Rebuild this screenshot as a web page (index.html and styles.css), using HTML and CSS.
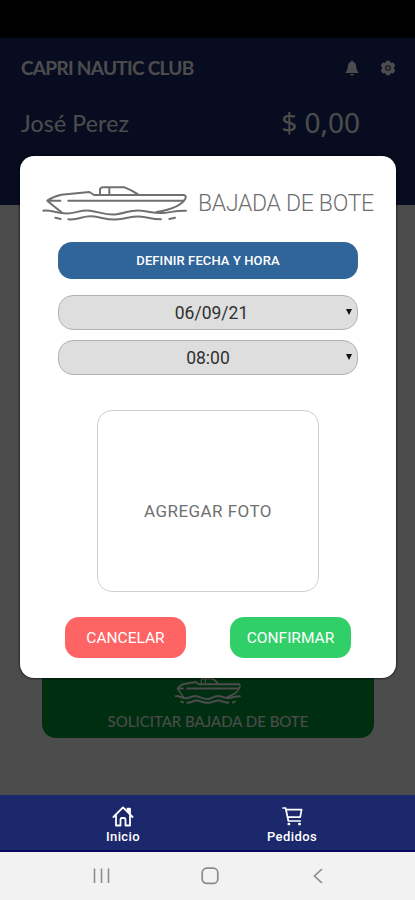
FILE: index.html
```
<!DOCTYPE html>
<html lang="es">
<head>
    <meta charset="UTF-8">
    <title>Capri Nautic Club</title>
    <link rel="stylesheet" href="styles.css">
</head>
<body>
    <svg class="symbols">
        <symbol id="boat" viewBox="0 0 450 135" preserveAspectRatio="none">
            <g fill="none" stroke="currentColor" stroke-linecap="round" stroke-linejoin="round">
                <path d="M64 96 Q38 76 22 62 Q40 49 64 44 L148 36 L162 45 H431 Q440 46 436 56 Q420 84 350 96"/>
                <path d="M180 43 V29 Q181 22 190 22 H254 Q274 30 294 43 M208 22 V43"/>
                <path d="M24 62 H61 M85 62 H430"/>
                <path d="M10 92 C35 90 44 98 72 100 C105 103 120 88 150 92 C180 96 200 107 230 103 C265 98 270 88 305 92 C335 96 345 101 370 99 C395 97 405 91 438 92"/>
                <path d="M46 113 L62 117 M85 118 C120 120 125 108 155 109 C185 111 200 121 235 118 C265 115 275 107 305 110 C330 113 335 118 363 118 M388 117 L405 113"/>
            </g>
        </symbol>
    </svg>
    <div class="phone">
        <div class="status-bar"></div>
        <div class="header">
            <div class="header-row">
                <div class="club">CAPRI NAUTIC CLUB</div>
                <div class="header-icons">
                    <svg width="14" height="16" viewBox="0 0 14 16" fill="currentColor">
                        <path d="M7 0.6 Q8 0.6 8 1.8 Q11 2.7 11.2 6.4 Q11.3 10.5 13.3 12 V13 H0.7 V12 Q2.7 10.5 2.8 6.4 Q3 2.7 6 1.8 Q6 0.6 7 0.6Z"/>
                        <path d="M5 14 H9 Q8.6 15.6 7 15.6 Q5.4 15.6 5 14Z"/>
                    </svg>
                    <svg width="16" height="16" viewBox="0 0 16 16">
                        <path fill="currentColor" fill-rule="evenodd" d="M6.2 0.7h3.6l.5 1.6 1.2.7 1.9-.5 1.9 3.1-1.3 1.6v1.6l1.3 1.6-1.9 3.1-1.9-.5-1.2.7-.5 1.6H6.2l-.5-1.6-1.2-.7-1.9.5L.7 10.4 2 8.8V7.2L.7 5.6l1.9-3.1 1.9.5 1.2-.7zM8 5.2a2.8 2.8 0 1 0 0 5.6 2.8 2.8 0 0 0 0-5.6z"/>
                        <circle cx="8" cy="8" r="1.8" fill="currentColor"/>
                    </svg>
                </div>
            </div>
            <div class="header-row account">
                <div class="user">José Perez</div>
                <div class="balance">$ 0,00</div>
            </div>
        </div>
        <div class="content">
            <div class="request">
                <svg class="request-boat"><use href="#boat"/></svg>
                <div class="request-text">SOLICITAR BAJADA DE BOTE</div>
            </div>
        </div>
        <div class="tabs">
            <div class="tab">
                <svg width="24" height="22" viewBox="0 0 24 22" fill="none" stroke="currentColor" stroke-width="1.8" stroke-linejoin="round" stroke-linecap="round">
                    <path d="M2.4 12 L12 2.4 L21.6 12 M5 10.5 V20.5 H9.5 V14.5 Q9.5 13 11 13 H13 Q14.5 13 14.5 14.5 V20.5 H19 V10.5"/>
                    <path fill="currentColor" d="M16.5 6 V3.6 H19 V8.5Z"/>
                </svg>
                <span>Inicio</span>
            </div>
            <div class="tab">
                <svg width="24" height="22" viewBox="0 0 24 22" fill="none" stroke="currentColor" stroke-width="1.7" stroke-linejoin="round" stroke-linecap="round">
                    <path d="M3 3 H5.6 L8.4 16 H20.2 M6.2 4.6 H21.6 L20.2 12.2 H7.6"/>
                    <path fill="currentColor" d="M8.4 18.6 H9.4 V19.4 H8.4Z M19 18.6 H20 V19.4 H19Z"/>
                </svg>
                <span>Pedidos</span>
            </div>
        </div>
        <div class="nav-bar">
            <svg width="18" height="18" viewBox="0 0 18 18" stroke="#8c8c8c" stroke-width="1.6">
                <path d="M1.5 1.5 V16 M8.5 1.5 V16 M15.5 1.5 V16"/>
            </svg>
            <svg width="18" height="18" viewBox="0 0 18 18" fill="none" stroke="#8c8c8c" stroke-width="1.7">
                <rect x="1.2" y="1.2" width="15.6" height="15.2" rx="4.5"/>
            </svg>
            <svg width="18" height="18" viewBox="0 0 18 18" fill="none" stroke="#8c8c8c" stroke-width="1.7">
                <path d="M13 2 L5.5 9 L13 16"/>
            </svg>
        </div>

        <div class="overlay">
            <div class="modal">
                <div class="modal-title">
                    <svg class="modal-boat"><use href="#boat"/></svg>
                    <span>BAJADA DE BOTE</span>
                </div>
                <button class="define">DEFINIR FECHA Y HORA</button>
                <div class="select date">06/09/21<i class="arrow"></i></div>
                <div class="select">08:00<i class="arrow"></i></div>
                <div class="photo">AGREGAR FOTO</div>
                <div class="actions">
                    <button class="cancel">CANCELAR</button>
                    <button class="confirm">CONFIRMAR</button>
                </div>
            </div>
        </div>
    </div>
</body>
</html>
```
FILE: styles.css
```
* {
    box-sizing: border-box;
}
body {
    margin: 0;
    font-family: Roboto, "Liberation Sans", sans-serif;
}
svg {
    display: block;
    flex: none;
}
.symbols {
    display: none;
}
.phone {
    position: relative;
    width: 415px;
    height: 900px;
    display: flex;
    flex-direction: column;
    overflow: hidden;
}
.status-bar {
    height: 38px;
    background: #000;
}
.header {
    height: 167px;
    padding: 15px 19px 0 21px;
    background: #18286c;
    color: #fff;
    font-family: Lato, sans-serif;
}
.header-row {
    display: flex;
    justify-content: space-between;
    align-items: center;
    height: 30px;
}
.club {
    padding-bottom: 2px;
    font-size: 19px;
    font-weight: bold;
    letter-spacing: -0.7px;
}
.header-icons {
    display: flex;
    gap: 21px;
}
.account {
    height: 38px;
    margin-top: 20px;
    padding-right: 36px;
}
.user {
    padding-top: 2px;
    font-size: 23px;
    letter-spacing: 0.2px;
}
.balance {
    font-family: "Noto Sans", sans-serif;
    font-size: 28px;
}
.content {
    flex: 1;
    display: flex;
    flex-direction: column;
    justify-content: flex-end;
    padding: 0 41px 57px 42px;
    background: #fff;
}
.request {
    height: 110px;
    padding-top: 45px;
    border-radius: 14px;
    background: #009a38;
    color: #fff;
    text-align: center;
}
.request-boat {
    width: 68px;
    height: 34px;
    margin: 0 auto;
    stroke-width: 8px;
}
.request-text {
    margin-top: 5px;
    font-family: Lato, sans-serif;
    font-size: 15px;
    line-height: 18px;
}
.tabs {
    display: flex;
    justify-content: space-between;
    height: 57px;
    padding: 10px 83px 0;
    background: #1c286c;
    border-bottom: 2px solid #08085c;
    color: #fff;
}
.tab {
    display: flex;
    flex-direction: column;
    align-items: center;
    width: 80px;
    font-size: 13px;
    font-weight: 500;
    line-height: 20px;
    letter-spacing: 0.4px;
}
.nav-bar {
    display: flex;
    justify-content: space-between;
    height: 48px;
    padding: 15px 88px 0 93px;
    background: #f2f2f2;
}

/* modal */
.overlay {
    position: absolute;
    top: 0;
    left: 0;
    width: 415px;
    height: 795px;
    padding: 156px 19px 0 20px;
    background: rgba(0, 0, 0, 0.7);
}
.modal {
    display: flex;
    flex-direction: column;
    align-items: center;
    height: 522px;
    padding-top: 24px;
    border-radius: 14px;
    background: #fff;
    box-shadow: 0 0 3px #000;
}
.modal-title {
    display: flex;
    align-items: center;
    gap: 8px;
    align-self: flex-start;
    margin-left: 20px;
    height: 45px;
    color: #707070;
    font-size: 23px;
    font-weight: 300;
    letter-spacing: -0.3px;
    white-space: nowrap;
}
.modal-title span {
    padding-top: 2px;
}
.modal-boat {
    width: 150px;
    height: 45px;
    stroke-width: 6px;
}
button {
    border: none;
    padding: 0;
    font-family: inherit;
    color: #fff;
}
.define {
    width: 300px;
    height: 37px;
    margin: 17px 0 16px;
    border-radius: 14px;
    background: #30659a;
    font-size: 13px;
    font-weight: 500;
    letter-spacing: 0.1px;
}
.select {
    position: relative;
    width: 300px;
    height: 35px;
    margin-bottom: 10px;
    border: 1px solid #b2b2b2;
    border-radius: 15px;
    background: #dedede;
    color: #303030;
    font-size: 17.5px;
    line-height: 34px;
    text-align: center;
}
.date {
    padding-left: 7px;
}
.arrow {
    position: absolute;
    right: 5px;
    top: 13px;
    border: 3px solid transparent;
    border-top: 6px solid #111;
    border-bottom: 0;
}
.photo {
    width: 222px;
    height: 182px;
    margin-top: 25px;
    padding-top: 20px;
    border: 1px solid #cfcfcf;
    border-radius: 15px;
    color: #707070;
    font-size: 17px;
    letter-spacing: 0.45px;
    display: flex;
    align-items: center;
    justify-content: center;
}
.actions {
    display: flex;
    gap: 44px;
    margin-top: 25px;
}
.actions button {
    width: 121px;
    height: 41px;
    border-radius: 14px;
    font-size: 15.5px;
}
.actions .cancel {
    background: #ff6464;
}
.actions .confirm {
    background: #30cf67;
}
```
